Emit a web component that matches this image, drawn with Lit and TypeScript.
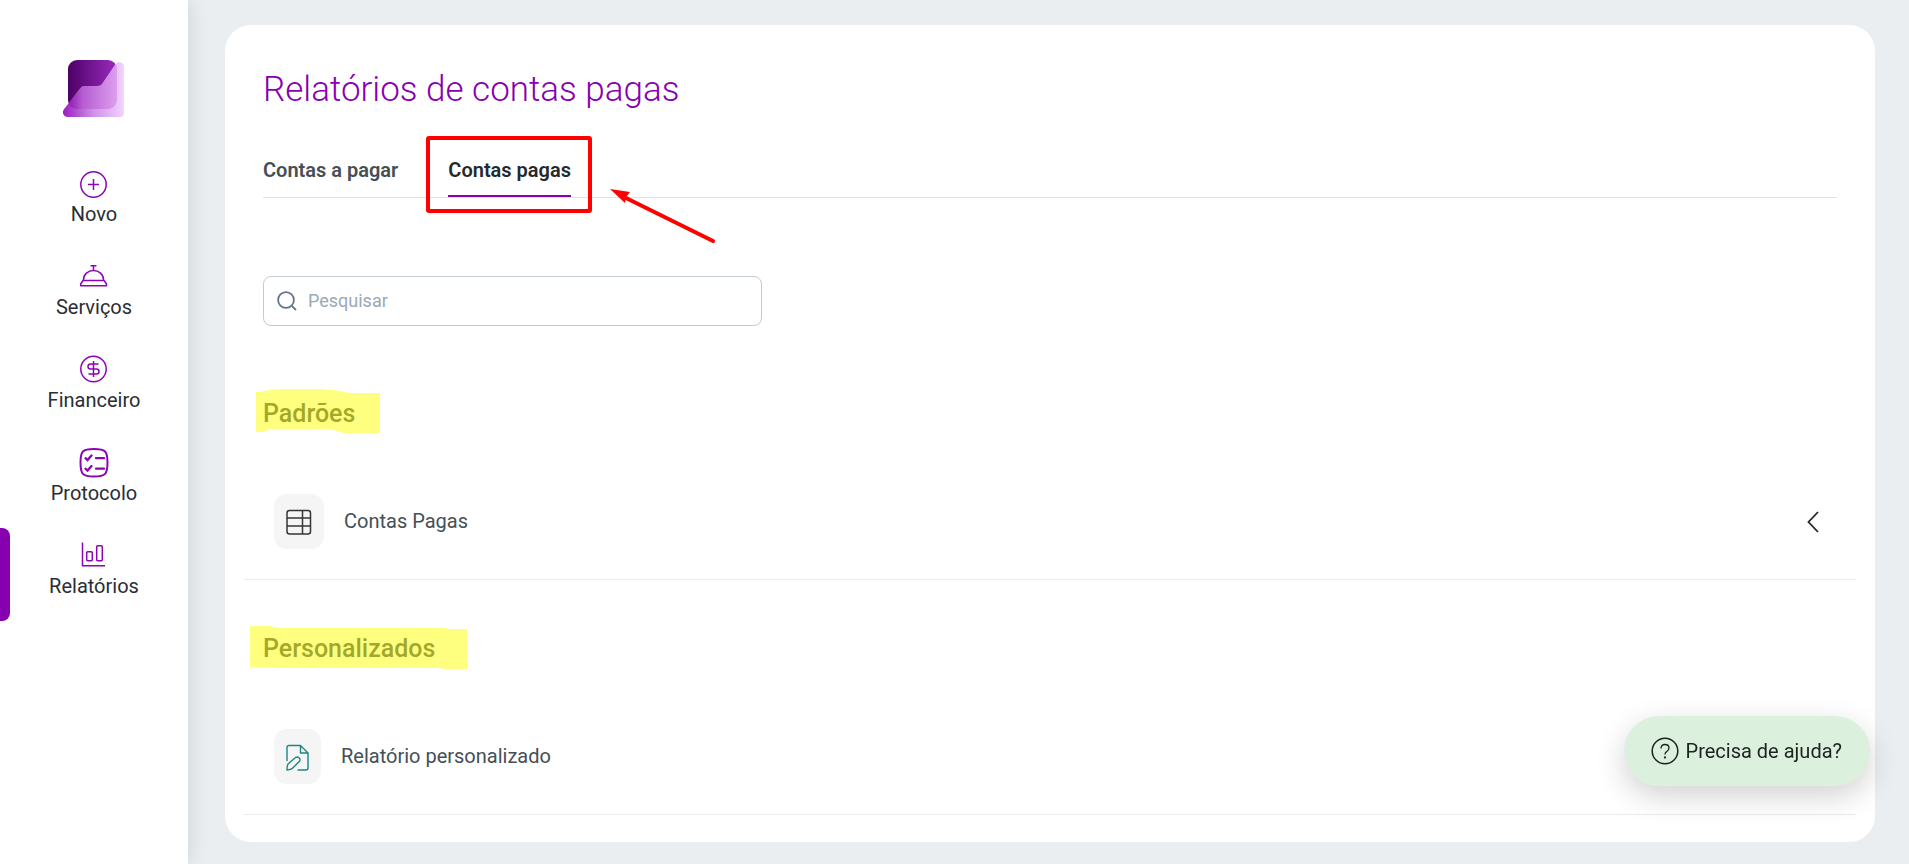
import { LitElement, html, css, svg } from "lit";
import { customElement, property, state } from "lit/decorators.js";
import { classMap } from "lit/directives/class-map.js";

const icons: Record<string, unknown> = {
  novo: svg`<circle cx="14.5" cy="15.5" r="12.700"/><path d="M14.5 10v11M9 15.5h11"/>`,
  servicos: svg`<path d="M11.5 3.7h6M14.5 4v5M4.5 18v-.5a10 9 0 0 1 20 0V18"/><path d="M4 18.5h21l2.5 3.5v1.8H1.7V22z" stroke-linejoin="round"/>`,
  financeiro: svg`<circle cx="14.5" cy="14" r="12.7"/><path d="M14.5 6v16M19.5 9h-8a2.4 2.4 0 0 0 0 5h6a2.5 2.5 0 0 1 0 5H9.5"/>`,
  protocolo: svg`<path stroke-width="2" d="M15 1c11.500 0 13.500 2 13.500 13.500S26.500 28.500 15 28.500 1.500 26 1.500 14.500 3.500 1 15 1z"/><path stroke-width="2.300" stroke-linecap="round" d="M6.500 10.200l2 1.800 4-4.500M6.500 20.700l2 1.800 4-4.500M17 10.200h8M17 20.700h8"/>`,
  relatorios: svg`<path d="M3.500 1.500v23.300H26"/><rect x="7.700" y="10.700" width="5.600" height="9" rx="1"/><rect x="17.700" y="4.700" width="5.600" height="15" rx="1"/>`,
};

const navItems = [
  { id: "novo", label: "Novo" },
  { id: "servicos", label: "Serviços" },
  { id: "financeiro", label: "Financeiro" },
  { id: "protocolo", label: "Protocolo" },
  { id: "relatorios", label: "Relatórios" },
];

@customElement("app-sidebar")
export class AppSidebar extends LitElement {
  @property() active = "relatorios";

  static styles = css`
    :host {
      display: block;
      background: #fff;
      box-shadow: 0 0 20px rgba(0, 0, 0, 0.12);
      font-family: Roboto, sans-serif;
    }
    .logo {
      display: flex;
      justify-content: center;
      padding: 60px 0 39px;
    }
    .logo svg {
      display: block;
    }
    .nav {
      display: flex;
      flex-direction: column;
    }
    .item {
      display: flex;
      flex-direction: column;
      align-items: center;
      gap: 3px;
      padding: 13px 0 23px;
      font-size: 20px;
      line-height: 24px;
      color: #2a2e33;
      text-decoration: none;
      position: relative;
    }
    .item.active::before {
      content: "";
      position: absolute;
      inset: 0 auto 0 0;
      width: 10px;
      border-radius: 0 8px 8px 0;
      background: #8700b0;
    }
    .icon {
      display: block;
      fill: none;
      stroke: #8a05b4;
      stroke-width: 1.5;
    }
  `;

  render() {
    return html`
      <div class="logo">
        <svg width="62" height="57" viewBox="0 0 62 57" aria-hidden="true">
          <defs>
            <linearGradient id="dark"><stop offset="0" stop-color="#4d0066"/><stop offset="1" stop-color="#9a2cc0"/></linearGradient>
            <linearGradient id="pale"><stop offset="0" stop-color="#9c1cc2"/><stop offset=".5" stop-color="#cf92e6"/><stop offset="1" stop-color="#f3d3ff"/></linearGradient>
            <linearGradient id="mid"><stop offset="0" stop-color="#8a1aae"/><stop offset=".3" stop-color="#b65dd2"/><stop offset="1" stop-color="#dd9eee"/></linearGradient>
            <clipPath id="front"><path d="M1.200 49L17.500 28q1.500-2 4-2h13.500q3 0 4.500-2.500L52 5q3-4.500 7-2 2 1 2 4v46q0 4-4 4H5q-3.500 0-5-3.500-.500-2.500 1.200-4.500z"/></clipPath>
          </defs>
          <rect x="5" width="49" height="49" rx="9" fill="url(#dark)"/>
          <g clip-path="url(#front)">
            <rect width="61" height="57" fill="url(#pale)"/>
            <rect x="5" width="49" height="49" rx="9" fill="url(#mid)"/>
          </g>
        </svg>
      </div>
      <nav class="nav" aria-label="Principal">
        ${navItems.map(
          (item) => html`<a class=${classMap({ item: true, active: item.id === this.active })} href="#${item.id}">
            <svg class="icon" width="30" height="30" viewBox="0 0 30 30" aria-hidden="true">${icons[item.id]}</svg>
            <span>${item.label}</span>
          </a>`
        )}
      </nav>
    `;
  }
}

@customElement("app-root")
export class AppRoot extends LitElement {
  @state() private tab = "pagas";

  static styles = css`
    :host {
      display: grid;
      grid-template-columns: 188px minmax(0, 1fr);
      min-height: 100vh;
      background: #eaeef1;
      color: #464f55;
      font-family: Roboto, "Noto Sans", sans-serif;
    }
    * {
      box-sizing: border-box;
    }
    button,
    input {
      font: inherit;
      color: inherit;
    }
    .page {
      padding: 25px 34px 22px 37px;
    }
    .card {
      background: #fff;
      border-radius: 26px;
      padding: 44px 19px 27px;
    }
    .head {
      padding: 0 19px;
    }
    h1 {
      margin: 0;
      font-size: 35px;
      line-height: 42px;
      font-weight: 300;
      color: #8700b0;
    }
    .tabs {
      display: flex;
      gap: 50px;
      margin-top: 47px;
      border-bottom: 1px solid #e0e2e3;
    }
    .tab {
      position: relative;
      padding: 0 0 13px;
      border: 0;
      border-bottom: 2px solid transparent;
      background: none;
      font-size: 20px;
      line-height: 24px;
      font-weight: 600;
      cursor: pointer;
    }
    .tab.selected {
      color: #23292e;
      border-color: #8700b0;
    }
    .frame {
      position: absolute;
      inset: -22px -21px -18px -22px;
      border: 4px solid #f00;
      border-radius: 3px;
    }
    .arrow {
      position: absolute;
      left: calc(100% + 39px);
      top: 31px;
    }
    .search {
      display: flex;
      align-items: center;
      gap: 11px;
      width: 499px;
      max-width: 100%;
      height: 50px;
      margin: 78px 0 74px;
      padding: 0 13px;
      border: 1px solid #c3cad2;
      border-radius: 8px;
    }
    .search input {
      flex: 1;
      min-width: 0;
      padding: 0;
      border: 0;
      outline: 0;
      background: none;
      font-size: 18px;
      line-height: 24px;
    }
    .search input::placeholder {
      color: #9aa9b6;
      opacity: 1;
    }
    h2 {
      margin: 0 19px 36px;
      font-size: 25px;
      line-height: 28px;
      font-weight: 500;
    }
    .marked {
      position: relative;
    }
    .marker {
      position: absolute;
      fill: #ff0;
      fill-opacity: 0.5;
      pointer-events: none;
    }
    .marker.first {
      left: -7px;
      top: -10px;
    }
    .marker.second {
      left: -13px;
      top: -9px;
    }
    .section + .section {
      margin-top: 55px;
    }
    .row {
      display: flex;
      align-items: center;
      gap: 20px;
      padding: 30px 37px 30px 30px;
      border: 0;
      border-bottom: 1px solid #eaecec;
      width: 100%;
      background: none;
      text-align: left;
      text-decoration: none;
      color: inherit;
      font-size: 20px;
      line-height: 24px;
    }
    .tile {
      display: grid;
      place-items: center;
      height: 55px;
      padding: 0 11px;
      border-radius: 13px;
      background: #f5f5f5;
    }
    .row .label {
      flex: 1;
      padding-bottom: 2px;
    }
    svg {
      display: block;
    }
    .line {
      fill: none;
    }
    .help {
      position: fixed;
      right: 39px;
      bottom: 78px;
      display: flex;
      align-items: center;
      gap: 7px;
      height: 70px;
      padding: 0 28px 0 27px;
      border: 0;
      border-radius: 35px;
      background: #dbf0dd;
      color: #1d2420;
      box-shadow: 0 10px 30px rgba(0, 0, 0, 0.18);
      font-size: 20px;
      line-height: 24px;
      cursor: pointer;
    }
  `;

  private selectTab(name: string) {
    this.tab = name;
  }

  render() {
    return html`
      <app-sidebar active="relatorios"></app-sidebar>
      <main class="page">
        <div class="card">
          <header class="head">
            <h1>Relatórios de contas pagas</h1>
            <div class="tabs" role="tablist">
              <button class=${classMap({ tab: true, selected: this.tab === "pagar" })} role="tab"
                aria-selected=${this.tab === "pagar"} @click=${() => this.selectTab("pagar")}>Contas a pagar</button>
              <button class=${classMap({ tab: true, selected: this.tab === "pagas" })} role="tab"
                aria-selected=${this.tab === "pagas"} @click=${() => this.selectTab("pagas")}>Contas pagas<span class="frame"></span>
                <svg class="arrow" width="106" height="56" viewBox="0 0 106 56" aria-hidden="true">
                  <path d="M16 9L103 52" stroke="#f00" stroke-width="4" stroke-linecap="round"/>
                  <path d="M0 0L20 3 16 8 15 14z" fill="#f00"/>
                </svg>
              </button>
            </div>
            <label class="search">
              <svg class="line" width="20" height="20" viewBox="0 0 20 20" stroke="#64748b" stroke-width="1.800" role="img" aria-label="Pesquisar">
                <circle cx="9" cy="9" r="7.900"/><path d="M14.600 14.600L19 19"/>
              </svg>
              <input type="search" placeholder="Pesquisar" />
            </label>
          </header>
          <section class="section">
            <h2><span class="marked">Padrões<svg class="marker first" width="124" height="44" viewBox="0 0 124 44" aria-hidden="true">
              <path d="M0 3h4Q14 0 28 0h36q18 1 30 4h30v40H87q-8-4-25-4H20q-8 0-13 3H0z"/></svg></span></h2>
            <button class="row">
              <span class="tile">
                <svg class="line" width="28" height="28" viewBox="0 0 28 28" stroke="#333638" stroke-width="1.500" aria-hidden="true">
                  <rect x="2" y="2.500" width="23.500" height="23.500" rx="2.500"/><path d="M2 10h23.500M2 18h23.500M17.500 2.500V26"/>
                </svg>
              </span>
              <span class="label">Contas Pagas</span>
              <svg class="line" width="12" height="22" viewBox="0 0 12 22" stroke="#222729" stroke-width="1.800" aria-hidden="true"><path d="M11 1L1.500 11 11 21"/></svg>
            </button>
          </section>
          <section class="section">
            <h2><span class="marked">Personalizados<svg class="marker second" width="217" height="44" viewBox="0 0 217 44" aria-hidden="true">
              <path d="M0 1h20l9 2h165l6 1h17v40h-23l-3-1H26l-5-1H0z"/></svg></span></h2>
            <a class="row" href="#personalizado">
              <span class="tile">
                <svg class="line" width="25" height="28" viewBox="0 0 25 28" stroke="#1f8585" stroke-width="1.400" stroke-linejoin="round" aria-hidden="true">
                  <path d="M2 18V4.500Q2 2.500 4 2.500h11.500l7.500 7.500V25q0 2-2 2h-8.500M15.500 2.500V10H23"/>
                  <path d="M2 27q0-5 1.500-6.500l7-6q1.800-1.200 3.500.200 1.800 1.800.500 3.500l-6.500 6.500Q7 26.500 2 27z"/>
                </svg>
              </span>
              <span class="label">Relatório personalizado</span>
            </a>
          </section>
        </div>
      </main>
      <button class="help">
        <svg class="line" width="28" height="28" viewBox="0 0 28 28" stroke="#1d2420" stroke-width="1.500" aria-hidden="true">
          <circle cx="14" cy="14" r="12.800"/>
          <path d="M10 11.500q0-4 4-4t4 3.600q0 2-2 3.200-2 1-2 3.200" stroke-width="1.300"/><circle cx="14" cy="20.500" r=".400"/>
        </svg>
        <span>Precisa de ajuda?</span>
      </button>
    `;
  }
}
